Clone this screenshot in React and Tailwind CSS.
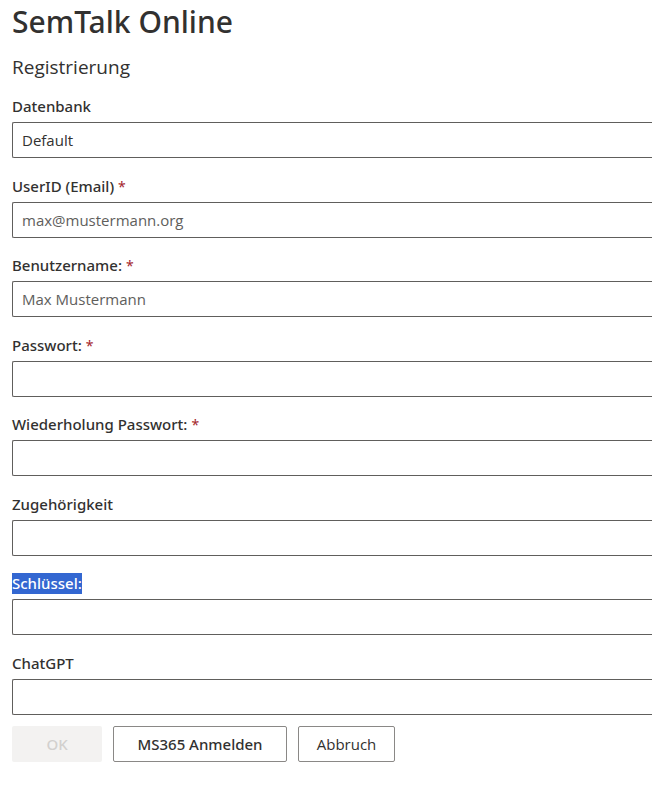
const fields = [
  { id: "database", label: "Datenbank", value: "Default" },
  { id: "email", label: "UserID (Email)", type: "email", placeholder: "max@mustermann.org", required: true },
  { id: "username", label: "Benutzername:", placeholder: "Max Mustermann", required: true },
  { id: "password", label: "Passwort:", type: "password", required: true },
  { id: "password-repeat", label: "Wiederholung Passwort:", type: "password", required: true },
  { id: "affiliation", label: "Zugehörigkeit" },
  { id: "key", label: "Schlüssel:", selected: true },
  { id: "chatgpt", label: "ChatGPT" },
];

function Field({ id, label, type = "text", value, placeholder, required, selected }) {
  return (
    <div className="flex flex-col not-first:odd:mt-[17px] even:mt-[18px]">
      <label htmlFor={id} className="mb-[5px] flex h-[21px] items-center text-[15px] leading-[21px] font-medium">
        <span className={selected ? "bg-[#3367d1] text-white" : ""}>{label}</span>
        {required && <span className="ml-1 text-[14px] font-normal text-[#a4262c]">*</span>}
      </label>
      <input
        id={id}
        type={type}
        defaultValue={value}
        placeholder={placeholder}
        required={required}
        className="h-9 w-full rounded-l-xs border border-r-0 border-[#605e5c] bg-white px-[9px] font-['Open_Sans','Noto_Sans',sans-serif] text-[15px] text-[#323130] outline-none placeholder:text-[#605e5c]"
      />
    </div>
  );
}

export default function App() {
  return (
    <main className="min-h-screen bg-white pl-3 font-['Noto_Sans','Open_Sans',sans-serif] text-[#323130]">
      <h1 className="pt-[2px] text-[30px] leading-10 font-medium">SemTalk Online</h1>
      <h2 className="mt-[11px] font-['Open_Sans','Noto_Sans',sans-serif] text-[19px] leading-7 font-normal">Registrierung</h2>
      <form className="pt-[15px]" onSubmit={(event) => event.preventDefault()}>
        <div>
          {fields.map((field) => (
            <Field key={field.id} {...field} />
          ))}
        </div>
        <div className="mt-[11px] flex gap-[11px] text-[15px] font-medium">
          <button type="submit" disabled className="h-9 w-[90px] rounded-xs bg-[#f3f2f1] text-[#d2d0ce]">
            OK
          </button>
          <button type="button" className="h-9 w-[174px] rounded-xs border border-[#8a8886] bg-white">
            MS365 Anmelden
          </button>
          <button type="button" className="h-9 w-[97px] rounded-xs border border-[#8a8886] bg-white font-['Open_Sans','Noto_Sans',sans-serif] font-normal">
            Abbruch
          </button>
        </div>
      </form>
    </main>
  );
}
